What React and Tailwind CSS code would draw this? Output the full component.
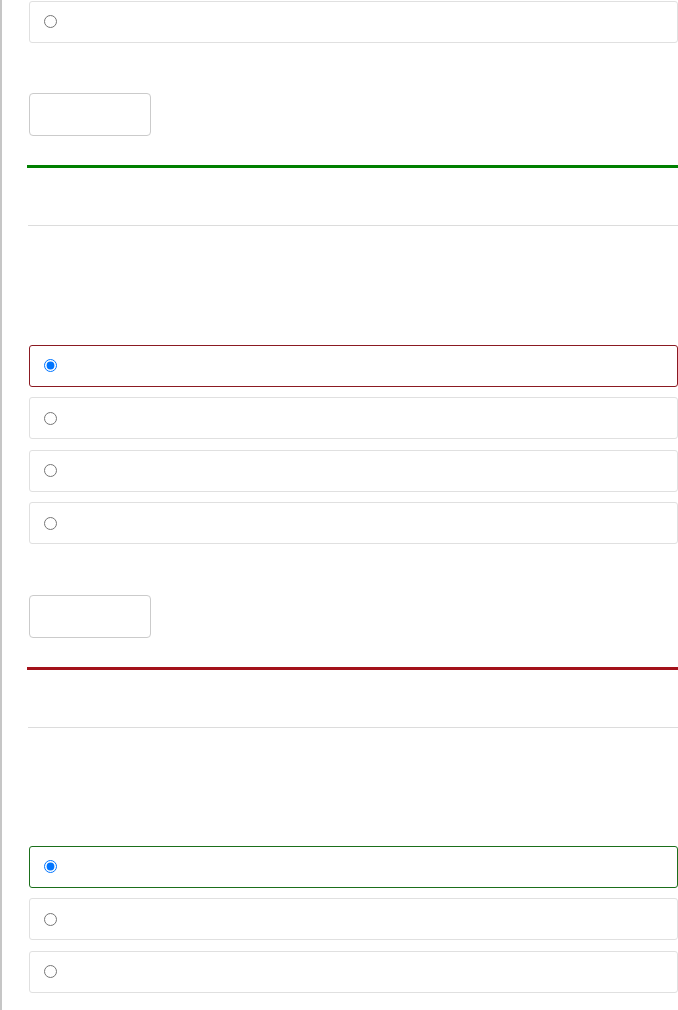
import React from 'react';

function Choice({ name, checked, tone }) {
  const border =
    tone === 'wrong' ? 'border-[#8b1a22]' : tone === 'right' ? 'border-[#1b6f1b]' : 'border-[#e0e0e0]';
  return (
    <label className={`ml-[2px] flex h-[42px] items-center rounded-[3px] border ${border} bg-white pl-[14px]`}>
      <input type="radio" name={name} defaultChecked={checked} className="m-0" />
    </label>
  );
}

function Submit() {
  return (
    <button
      type="button"
      className="ml-[2px] block h-[43px] w-[122px] rounded-[4px] border border-[#cbcbcb] bg-white"
    />
  );
}

export default function App() {
  return (
    <div className="min-h-screen border-l-2 border-[#c6c6c6] bg-white" style={{ fontFamily: '"Liberation Sans", Arial, sans-serif' }}>
      <div className="flex flex-col pl-[25px] pt-[0.5px]">
        {/* tail of previous question */}
        <Choice name="q0" />
        <div className="mt-[50.5px] flex">
          <Submit />
        </div>
        <div className="mt-[29px] h-[3px] bg-[#008000]" />
        <div className="ml-[1px] mt-[57px] h-px bg-[#dcdcdc]" />

        {/* answered wrong */}
        <div className="mt-[118.5px] flex flex-col gap-[10.5px]">
          <Choice name="q1" checked tone="wrong" />
          <Choice name="q1" />
          <Choice name="q1" />
          <Choice name="q1" />
        </div>
        <div className="mt-[50.5px] flex">
          <Submit />
        </div>
        <div className="mt-[29px] h-[3px] bg-[#a3111a]" />
        <div className="ml-[1px] mt-[57px] h-px bg-[#dcdcdc]" />

        {/* answered right */}
        <div className="mt-[118px] flex flex-col gap-[10.5px]">
          <Choice name="q2" checked tone="right" />
          <Choice name="q2" />
          <Choice name="q2" />
        </div>
      </div>
    </div>
  );
}
